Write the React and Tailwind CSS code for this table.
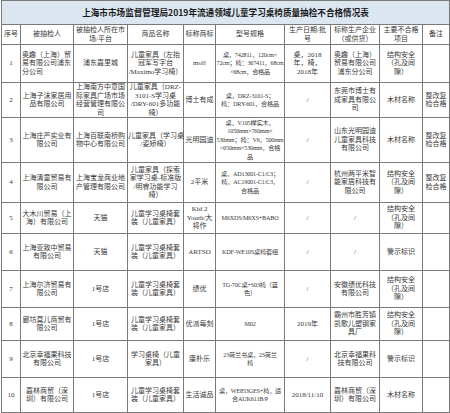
import React from "react";

const cols = [19, 53, 54, 56, 32, 69, 46, 49, 43, 27];

const header = [
  ["序号"],
  ["被抽检人"],
  ["被抽检人所在市", "场/平台"],
  ["商品名称"],
  ["标称商标"],
  ["型号规格"],
  ["生产日期/批", "号"],
  ["标称生产企业", "（或供货）"],
  ["主要不合格", "项目"],
  ["备注"],
];

const kong = ["结构安全", "（孔及间", "隙）"];
const fix = ["整改复", "检合格"];
const taozhuang = ["儿童学习桌椅套", "装（儿童家具）"];

const rows = [
  {
    h: "h-[38px]",
    c: [
      ["1"],
      ["奥趣（上海）贸", "易有限公司浦东", "分公司"],
      ["浦东嘉里城"],
      ["儿童家具（左抬", "冠军写字台", "/Maximo学习椅）"],
      ["moll"],
      ["桌，742811，120cm×", "72cm；椅：367411，68cm", "×68cm，合格品"],
      ["桌，2018", "年，椅，", "2018年"],
      ["奥趣（上海）", "贸易有限公司", "浦东分公司"],
      kong,
      [],
    ],
    left: [1],
  },
  {
    h: "h-[35px]",
    c: [
      ["2"],
      ["上海子沫家居用", "品有限公司"],
      ["上海南方中意国", "际家具广场市场", "经营管理有限公", "司"],
      ["儿童家具（DRZ-", "3101-S学习桌", "/DRY-601多功能", "椅）"],
      ["博士有成"],
      ["桌，DRZ-3101-S；", "椅：DRY-601，合格品"],
      ["/"],
      ["东莞市博士有", "成家具有限公", "司"],
      ["木材名称"],
      fix,
    ],
  },
  {
    h: "h-[45px]",
    c: [
      ["3"],
      ["上海庄严实业有", "限公司"],
      ["上海百联南桥购", "物中心有限公司"],
      ["儿童家具（学习桌", "/姿矫椅）"],
      ["光明园迪"],
      ["桌，V105榉实木，", "1050mm×760mm×", "530mm；椅：V6，500mm", "×650mm×530mm，合格", "品"],
      ["/"],
      ["山东光明园迪", "儿童家具科技", "有限公司"],
      ["木材名称"],
      fix,
    ],
  },
  {
    h: "h-[40px]",
    c: [
      ["4"],
      ["上海清童贸易有", "限公司"],
      ["上海宝龙商业地", "产管理有限公司"],
      ["儿童家具（探索", "家学习桌-标准版", "/明睿功能学习", "椅）"],
      ["2平米"],
      ["桌，AD13001-C1/C3；", "椅，AC19001-C1/C3，", "合格品"],
      ["/"],
      ["杭州两平米智", "能家居科技有", "限公司"],
      kong,
      fix,
    ],
  },
  {
    h: "h-[31px]",
    c: [
      ["5"],
      ["大木川贸易（上", "海）有限公司"],
      ["天猫"],
      taozhuang,
      ["Kid 2", "Youth/大", "将作"],
      ["M6XDS/M6XS+BABO"],
      ["/"],
      ["/"],
      kong,
      [],
    ],
  },
  {
    h: "h-[37px]",
    c: [
      ["6"],
      ["上海亚致中贸易", "有限公司"],
      ["天猫"],
      taozhuang,
      ["ARTSO"],
      ["KDF-WE10S桌椅套组"],
      ["/"],
      ["/"],
      ["警示标识"],
      [],
    ],
  },
  {
    h: "h-[37px]",
    c: [
      ["7"],
      ["上海尔济贸易有", "限公司"],
      ["1号店"],
      taozhuang,
      ["绩优"],
      ["TG-70C桌+S03椅（蓝", "色）"],
      ["/"],
      ["安徽绩优科技", "有限公司"],
      kong,
      [],
    ],
  },
  {
    h: "h-[33px]",
    c: [
      ["8"],
      ["廊坊莫儿商贸有", "限公司"],
      ["1号店"],
      taozhuang,
      ["优派每刻"],
      ["M02"],
      ["2019年"],
      ["霸州市胜芳镇", "凯歌儿塑钢家", "具厂"],
      kong,
      [],
    ],
  },
  {
    h: "h-[37px]",
    c: [
      ["9"],
      ["北京幸福果科技", "有限公司"],
      ["1号店"],
      ["学习桌椅（儿童", "家具）"],
      ["康朴乐"],
      ["23荷兰书桌，23荷兰", "椅"],
      ["/"],
      ["北京幸福果科", "技有限公司"],
      ["警示标识"],
      [],
    ],
  },
  {
    h: "h-[35px]",
    c: [
      ["10"],
      ["嘉林商贸（深", "圳）有限公司"],
      ["1号店"],
      taozhuang,
      ["生活诚品"],
      ["桌，WE853GES+椅，适", "合AUK611B/P"],
      ["2018/11/10"],
      ["嘉林商贸（深", "圳）有限公司"],
      ["木材名称"],
      [],
    ],
  },
];

function Lines({ lines, i }) {
  return (
    <div className={`whitespace-nowrap ${i === 5 ? "text-[6.2px] tracking-[-0.2px]" : ""}`}>
      {lines.map((l, k) => (
        <div key={k}>{l}</div>
      ))}
    </div>
  );
}

export default function App() {
  return (
    <div className="w-[450px] h-[413px] bg-white overflow-hidden font-['Liberation_Serif','Noto_Sans_CJK_SC',serif] text-[7px] leading-[8.5px] text-[#383838]">
      <table className="table-fixed border-collapse w-[449px] ml-px">
        <colgroup>
          {cols.map((w, i) => (
            <col key={i} style={{ width: w }} />
          ))}
        </colgroup>
        <tbody>
          <tr className="h-[24px]">
            <td
              colSpan={10}
              className="border border-[#7a7a7a] bg-[#dce6f0] text-center align-middle font-['Noto_Sans_CJK_SC',sans-serif] font-bold text-[8.6px] text-[#1a1a1a]"
            >
              上海市市场监督管理局2019年流通领域儿童学习桌椅质量抽检不合格情况表
            </td>
          </tr>
          <tr className="h-[20px]">
            {header.map((lines, i) => (
              <td
                key={i}
                className="border border-[#7a7a7a] text-center align-middle p-0"
              >
                <Lines lines={lines} i={-1} />
              </td>
            ))}
          </tr>
          {rows.map((r, ri) => (
            <tr key={ri} className={r.h}>
              {r.c.map((lines, i) => (
                <td
                  key={i}
                  className={`border border-[#7a7a7a] align-middle p-0 ${
                    r.left && r.left.includes(i) ? "text-left pl-[1px]" : "text-center"
                  }`}
                >
                  <Lines lines={lines} i={i} />
                </td>
              ))}
            </tr>
          ))}
        </tbody>
      </table>
    </div>
  );
}
